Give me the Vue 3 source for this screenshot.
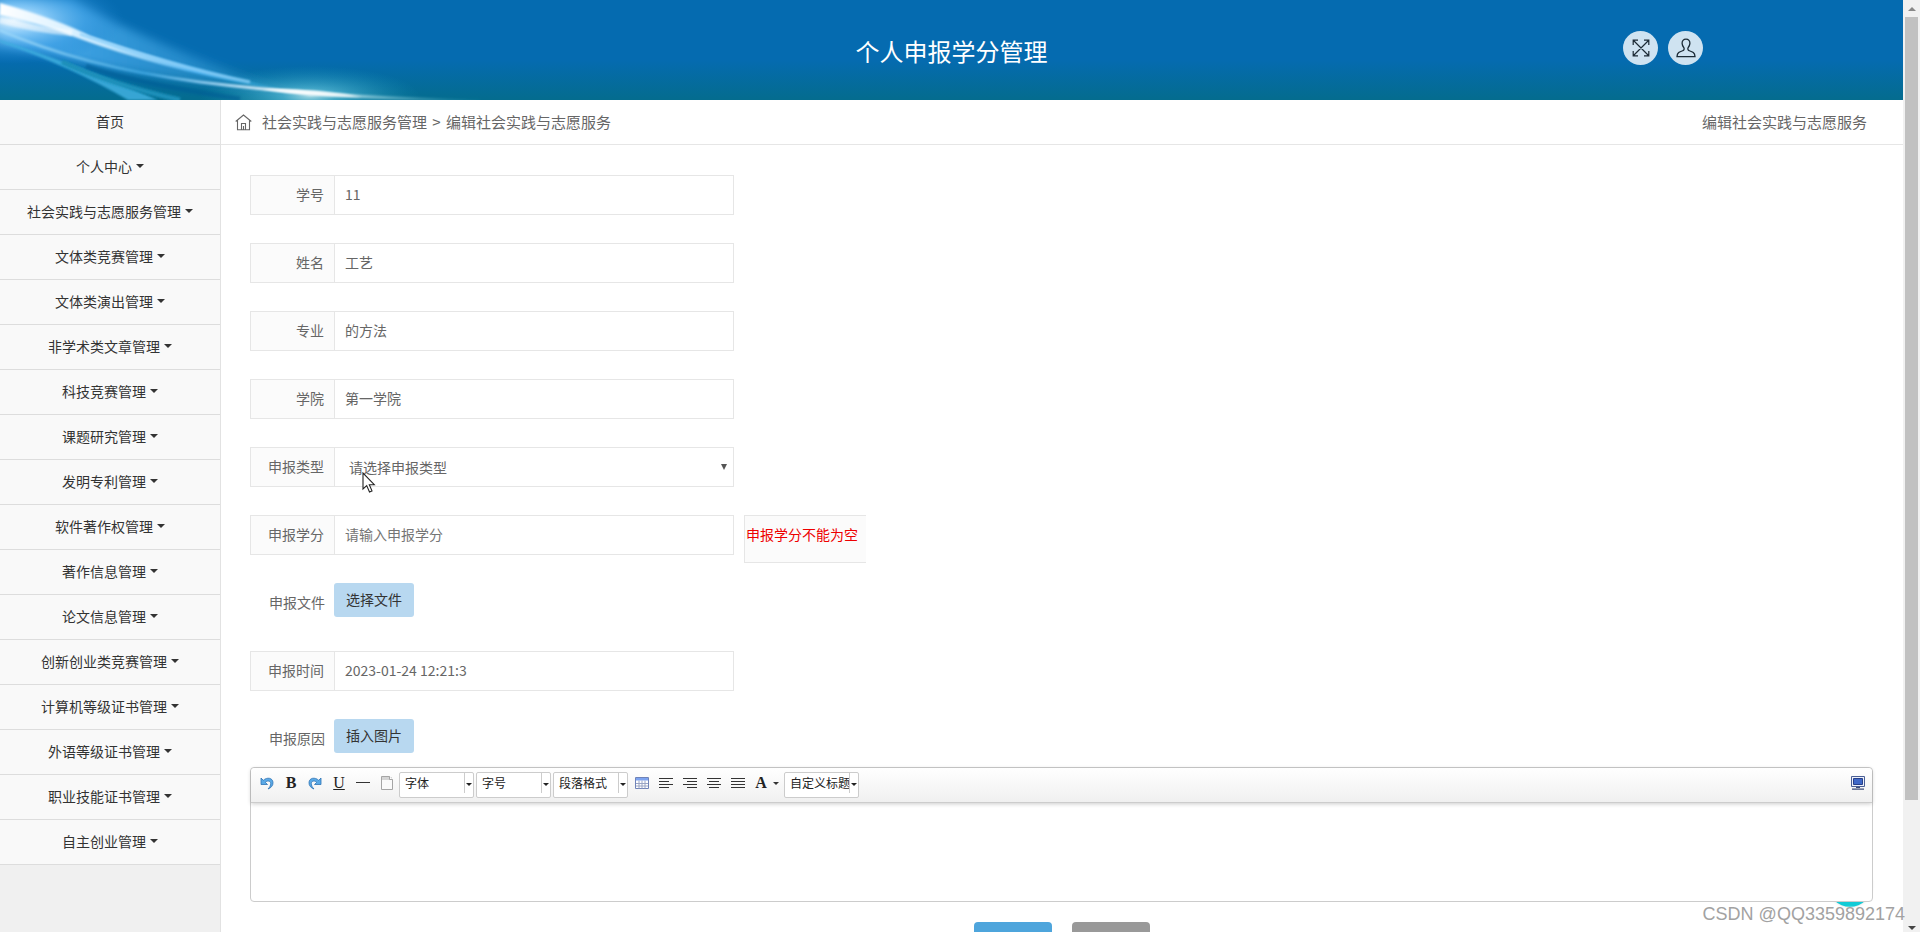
<script setup>
import { ref } from 'vue'

const menu = [
  '个人中心',
  '社会实践与志愿服务管理',
  '文体类竞赛管理',
  '文体类演出管理',
  '非学术类文章管理',
  '科技竞赛管理',
  '课题研究管理',
  '发明专利管理',
  '软件著作权管理',
  '著作信息管理',
  '论文信息管理',
  '创新创业类竞赛管理',
  '计算机等级证书管理',
  '外语等级证书管理',
  '职业技能证书管理',
  '自主创业管理',
]

const profile = ref([
  { id: 'sno', label: '学号', value: '11' },
  { id: 'name', label: '姓名', value: '工艺' },
  { id: 'major', label: '专业', value: '的方法' },
  { id: 'college', label: '学院', value: '第一学院' },
])
const credit = ref('')
const time = ref('2023-01-24 12:21:3')

const aligns = [
  { name: '居左对齐', d: 'M0 1.5H14M0 4.5H10M0 7.5H14M0 10.5H10' },
  { name: '居右对齐', d: 'M0 1.5H14M4 4.5H14M0 7.5H14M4 10.5H14' },
  { name: '居中对齐', d: 'M0 1.5H14M2 4.5H12M0 7.5H14M2 10.5H12' },
  { name: '两端对齐', d: 'M0 1.5H14M0 4.5H14M0 7.5H14M0 10.5H14' },
]
const combos = ['字体', '字号', '段落格式']
</script>

<template>
  <div class="app">
    <div class="page">
      <header class="banner">
        <svg class="rays" width="640" height="100" viewBox="0 0 640 100" aria-hidden="true">
          <defs>
            <radialGradient id="glowA"><stop offset="0" stop-color="#e6f5ff" stop-opacity=".95" /><stop offset=".3" stop-color="#8fcdf8" stop-opacity=".85" /><stop offset=".65" stop-color="#3f9fe4" stop-opacity=".55" /><stop offset="1" stop-color="#1a7fcc" stop-opacity="0" /></radialGradient>
            <radialGradient id="glowB"><stop offset="0" stop-color="#d9fbff" /><stop offset=".25" stop-color="#6fd2ec" stop-opacity=".75" /><stop offset="1" stop-color="#1b9cc4" stop-opacity="0" /></radialGradient>
            <linearGradient id="beam"><stop offset="0" stop-color="#fff" /><stop offset=".35" stop-color="#c8eaff" /><stop offset=".65" stop-color="#4bb0ee" /><stop offset="1" stop-color="#2ba6d2" stop-opacity=".2" /></linearGradient>
            <linearGradient id="arc"><stop offset="0" stop-color="#9bd6fa" /><stop offset=".3" stop-color="#3aa3de" /><stop offset=".62" stop-color="#fff" /><stop offset="1" stop-color="#2ba6c0" stop-opacity=".1" /></linearGradient>
            <linearGradient id="haze"><stop offset="0" stop-color="#5bbcff" stop-opacity=".9" /><stop offset="1" stop-color="#2a94cc" stop-opacity=".3" /></linearGradient>
            <filter id="soft1" x="-20%" y="-50%" width="140%" height="200%"><feGaussianBlur stdDeviation="1" /></filter>
            <filter id="soft6" x="-20%" y="-40%" width="140%" height="180%"><feGaussianBlur stdDeviation="5" /></filter>
          </defs>
          <path d="M0 0H70Q150 42 250 78L310 95Q170 82 60 58L0 42Z" fill="url(#haze)" filter="url(#soft6)" />
          <ellipse cx="14" cy="20" rx="110" ry="44" fill="url(#glowA)" />
          <ellipse cx="310" cy="96" rx="110" ry="30" fill="url(#glowB)" opacity=".75" />
          <path d="M0 40Q70 62 158 100H128Q70 66 0 42Z" fill="#3fb0e0" opacity=".85" filter="url(#soft1)" />
          <path d="M62 62Q110 84 180 100" fill="none" stroke="#1b8fb9" stroke-width="5" filter="url(#soft1)" />
          <path d="M86 66Q130 82 240 99" fill="none" stroke="#035c95" stroke-width="5" opacity=".55" filter="url(#soft1)" />
          <path d="M0 3Q60 20 90 36Q180 67 300 93Q180 76 72 36Q30 20 0 15Z" fill="url(#beam)" filter="url(#soft1)" />
          <path d="M80 34Q170 66 250 82" fill="none" stroke="#8fd2fb" stroke-width="3" opacity=".8" filter="url(#soft1)" />
          <path d="M0 20Q32 29 72 33" fill="none" stroke="#fff" stroke-width="6" opacity=".55" filter="url(#soft1)" />
          <path d="M0 30Q80 66 200 82Q320 97 480 101" fill="none" stroke="url(#arc)" stroke-width="3" filter="url(#soft1)" />
          <path d="M262 89Q314 88 362 97Q312 98 262 89Z" fill="#fff" opacity=".8" filter="url(#soft1)" />
        </svg>
        <h1>个人申报学分管理</h1>
        <div class="tools">
          <button type="button" class="round" aria-label="全屏">
            <svg width="18" height="18" viewBox="0 0 18 18" fill="none" stroke="#1c2b36" stroke-width="1.2"><path d="M1.5 1.5 16.5 16.5M16.5 1.5 1.5 16.5M1.2 6V1.2H6M12 1.2H16.8V6M16.8 12V16.8H12M6 16.8H1.2V12" /></svg>
          </button>
          <button type="button" class="round" aria-label="用户">
            <svg width="20" height="20" viewBox="0 0 20 20" fill="none" stroke="#1c2b36" stroke-width="1.3"><path d="M10 1.2C7.4 1.2 6 3 6.1 5.4C6.2 7.4 7 8.700 7.900 9.700C8.500 10.800 8 12.200 6.800 12.700C3.500 13.800 1.200 14.500 1 18.600H19C18.800 14.500 16.500 13.800 13.200 12.700C12 12.200 11.500 10.800 12.100 9.700C13 8.700 13.800 7.400 13.900 5.400C14 3 12.600 1.200 10 1.200Z" /></svg>
          </button>
        </div>
      </header>

      <div class="columns">
        <nav class="side">
          <a href="#" class="item">首页</a>
          <a v-for="m in menu" :key="m" href="#" class="item">{{ m }}<i class="caret"></i></a>
        </nav>

        <main class="main">
          <div class="crumbs">
            <svg width="17" height="17" viewBox="0 0 17 17" fill="none" stroke="#666" stroke-width="1.1"><path d="M.7 7.500 8.500 1 16.300 7.500M2.500 6.500V15.800H14.500V6.500M6.500 15.500V9.500H10.500V15.500M8.500 12V15.500" /></svg>
            <a href="#">社会实践与志愿服务管理</a>
            <span class="sep">&gt;</span>
            <span>编辑社会实践与志愿服务</span>
            <span class="here">编辑社会实践与志愿服务</span>
          </div>

          <form class="form" @submit.prevent>
            <div v-for="f in profile" :key="f.id" class="row">
              <div class="box">
                <label :for="f.id">{{ f.label }}</label>
                <input :id="f.id" v-model="f.value" type="text" />
              </div>
            </div>
            <div class="row">
              <div class="box pick">
                <label for="type">申报类型</label>
                <select id="type"><option>请选择申报类型</option></select>
                <svg class="cursor" width="14" height="22" viewBox="0 0 14 22" aria-hidden="true"><path d="M1 1V17L4.700 13.600 7.500 20 10 18.900 7.300 12.700H12.300Z" fill="#fff" stroke="#222" stroke-width="1.100" /></svg>
              </div>
            </div>
            <div class="row">
              <div class="box">
                <label for="credit">申报学分</label>
                <input id="credit" v-model="credit" type="text" placeholder="请输入申报学分" />
              </div>
              <div class="error" role="alert">申报学分不能为空</div>
            </div>
            <div class="row">
              <div class="box plain">
                <label for="file">申报文件</label>
                <button id="file" type="button" class="soft">选择文件</button>
              </div>
            </div>
            <div class="row">
              <div class="box">
                <label for="time">申报时间</label>
                <input id="time" v-model="time" type="text" />
              </div>
            </div>
            <div class="row last">
              <div class="box plain">
                <label for="image">申报原因</label>
                <button id="image" type="button" class="soft">插入图片</button>
              </div>
            </div>

            <div class="editor">
              <div class="bar">
                <button type="button" aria-label="撤销"><svg width="14" height="14" viewBox="0 0 14 14"><path d="M1 2V8.500H7.500L5.300 6.300C7 4.500 10.500 4.500 10.700 7.500C10.800 9.500 9.500 11.500 8 13C11 12 13.200 9.500 13 6.500C12.800 1.800 7 .8 3.300 4.300Z" fill="#5aa9e6" stroke="#2f74b5" stroke-width=".8" /></svg></button>
                <button type="button" class="serif" aria-label="加粗"><b>B</b></button>
                <button type="button" aria-label="重做"><svg width="14" height="14" viewBox="0 0 14 14"><path d="M13 2V8.500H6.500L8.700 6.300C7 4.500 3.500 4.500 3.300 7.500C3.200 9.500 4.500 11.500 6 13C3 12 .8 9.500 1 6.500C1.200 1.800 7 .8 10.700 4.300Z" fill="#5aa9e6" stroke="#2f74b5" stroke-width=".8" /></svg></button>
                <button type="button" class="serif" aria-label="下划线"><u>U</u></button>
                <button type="button" aria-label="分隔线"><svg width="14" height="14" viewBox="0 0 14 14"><path d="M0 6.500H14" stroke="#333" /></svg></button>
                <button type="button" aria-label="清空文档"><svg width="14" height="14" viewBox="0 0 14 14"><path d="M1.500.5H9.500L12.500 3.500V13.500H1.500Z" fill="#fafafa" stroke="#a5a5a5" /><path d="M2 1H12V4H2Z" fill="#d5d5d5" /><path d="M9.500.5V3.500H12.500" fill="#fff" stroke="#a5a5a5" /></svg></button>
                <span v-for="c in combos" :key="c" class="combo"><select :aria-label="c"><option>{{ c }}</option></select></span>
                <button type="button" aria-label="插入表格"><svg width="14" height="14" viewBox="0 0 14 14"><path d="M.5 1.500H13.500V12.500H.5Z" fill="#fff" stroke="#6f83b8" /><path d="M1 2H13V4.500H1Z" fill="#7da3f0" /><path d="M1 7.500H13M1 10H13M4 4.500V12.500M7 4.500V12.500M10 4.500V12.500" stroke="#9aa5c4" /></svg></button>
                <button v-for="a in aligns" :key="a.name" type="button" :aria-label="a.name"><svg width="14" height="12" viewBox="0 0 14 12"><path :d="a.d" stroke="#333" /></svg></button>
                <button type="button" class="serif color" aria-label="字体颜色"><b>A</b><i class="caret tiny"></i></button>
                <span class="combo"><select aria-label="自定义标题"><option>自定义标题</option></select></span>
                <button type="button" class="full" aria-label="全屏编辑"><svg width="14" height="14" viewBox="0 0 14 14"><path d="M.5.5H13.500V10.500H.5Z" fill="#eef1fa" stroke="#4a5f95" /><path d="M2.500 2.500H11.500V8.500H2.500Z" fill="#3f68c8" stroke="#27408a" /><path d="M5 11.500H9M1 13.200H13" stroke="#3c4c78" stroke-width="1.200" /></svg></button>
              </div>
              <textarea class="area" aria-label="申报原因内容"></textarea>
            </div>

            <div class="actions">
              <button type="submit" class="ok" aria-label="提交"></button>
              <button type="button" class="back" aria-label="返回"></button>
            </div>
          </form>
          <span class="bubble"></span>
        </main>
      </div>
    </div>
    <div class="scroll" aria-hidden="true">
      <i class="up"></i>
      <div class="thumb"></div>
      <i class="down"></i>
    </div>
    <div class="mark">CSDN @QQ3359892174</div>
  </div>
</template>

<style>
body {
  margin: 0;
  overflow: hidden;
}
</style>

<style scoped>
.app {
  position: relative;
  display: flex;
  height: 100vh;
  overflow: hidden;
  background: #fff;
  color: #666;
  font: 14px/20px "Noto Sans CJK SC", sans-serif;
}
.app * {
  box-sizing: border-box;
}
button,
input,
select,
textarea {
  margin: 0;
  font: inherit;
  color: inherit;
}
a {
  color: inherit;
  text-decoration: none;
}
.page {
  flex: 1;
  min-width: 0;
  display: flex;
  flex-direction: column;
}
.banner {
  position: relative;
  flex: none;
  display: flex;
  align-items: center;
  justify-content: center;
  height: 100px;
  background: linear-gradient(#056bb0 0, #056bb0 60px, #046c8e 100px);
}
.rays {
  position: absolute;
  left: 0;
  top: 0;
}
h1 {
  margin: 2px 0 0;
  font-size: 24px;
  line-height: 36px;
  font-weight: 400;
  color: #fff;
}
.tools {
  position: absolute;
  right: 200px;
  top: 31px;
  display: flex;
  gap: 10px;
}
.round {
  display: flex;
  align-items: center;
  justify-content: center;
  width: 35px;
  height: 34px;
  padding: 0;
  border: 0;
  border-radius: 50%;
  background: #cfe3f1;
}
.columns {
  flex: 1;
  display: flex;
  min-height: 0;
}
.side {
  flex: none;
  width: 221px;
  border-right: 1px solid #e2e2e2;
  background: #f0f0f0;
}
.item {
  display: flex;
  align-items: center;
  justify-content: center;
  height: 45px;
  padding-bottom: 2px;
  border-bottom: 1px solid #ddd;
  background: #f9f9f9;
  color: #333;
}
.caret {
  margin-left: 4px;
  border: 4px solid transparent;
  border-top-color: #333;
  border-bottom: 0;
}
.main {
  position: relative;
  flex: 1;
  min-width: 0;
}
.crumbs {
  display: flex;
  align-items: center;
  height: 45px;
  padding: 0 36px 0 14px;
  border-bottom: 1px solid #e6e6e6;
  font-size: 15px;
}
.crumbs svg {
  margin-right: 10px;
}
.sep {
  width: 19px;
  text-align: center;
}
.here {
  margin-left: auto;
}
.form {
  padding: 30px 30px 0 29px;
}
.row {
  display: flex;
  align-items: flex-start;
  gap: 10px;
  height: 40px;
  margin-bottom: 28px;
}
.row.last {
  margin-bottom: 8px;
}
.box {
  display: flex;
  width: 484px;
  height: 40px;
  border: 1px solid #e6e6e6;
}
.box label {
  flex: none;
  width: 84px;
  padding: 8px 10px 8px 0;
  border-right: 1px solid #e6e6e6;
  background: #fbfbfb;
  text-align: right;
}
.box input,
.box select {
  flex: 1;
  min-width: 0;
  padding: 0 10px 2px;
  border: 0;
  outline: 0;
  background: #fff;
}
.box input::placeholder {
  color: #757575;
  opacity: 1;
}
.pick {
  position: relative;
}
.box select {
  appearance: none;
  padding: 0 14px;
}
.pick::after {
  content: "";
  position: absolute;
  right: 6px;
  top: 16px;
  border: 3px solid transparent;
  border-top: 6px solid #555;
  border-bottom: 0;
}
.cursor {
  position: absolute;
  left: 111px;
  top: 24px;
}
.plain {
  border-color: transparent;
}
.plain label {
  width: 83px;
  padding-right: 9px;
  border-right: 0;
  background: none;
}
.soft {
  width: 80px;
  height: 34px;
  margin-top: -1px;
  padding: 0 0 2px;
  border: 0;
  border-radius: 3px;
  background: #b8d8f0;
  color: #333;
}
.error {
  width: 122px;
  height: 48px;
  padding: 8px 0 0 1px;
  border: solid #e6e6e6;
  border-width: 1px 0 1px 1px;
  background: #fbfbfb;
  color: #e00;
}
.editor {
  position: relative;
  z-index: 1;
  border: 1px solid #ccc;
  border-radius: 4px;
  background: #fff;
}
.bar {
  position: relative;
  display: flex;
  align-items: center;
  height: 35px;
  padding: 0 7px 4px 4px;
  border-bottom: 1px solid #ccc;
  border-radius: 4px 4px 0 0;
  background: linear-gradient(#fff, #f0f0f0);
  box-shadow: 0 1px 4px rgba(0, 0, 0, 0.2);
  color: #222;
  font-size: 12px;
}
.bar button {
  display: flex;
  align-items: center;
  justify-content: center;
  width: 24px;
  height: 24px;
  padding: 0;
  border: 0;
  background: none;
}
.bar .serif {
  font: 16px/20px "Liberation Serif", serif;
}
.bar .color {
  width: 34px;
}
.caret.tiny {
  border-width: 3px;
  border-bottom: 0;
  margin: 0 0 0 6px;
}
.combo {
  position: relative;
  width: 75px;
  height: 26px;
  margin: 4px 2px 0 0;
  border: 1px solid #ccc;
  border-radius: 2px;
  background: #fff;
}
.combo select {
  appearance: none;
  width: 65px;
  height: 20px;
  padding: 0 0 0 5px;
  overflow: hidden;
  border: 0;
  border-right: 1px solid #ccc;
  outline: 0;
  background: none;
}
.combo::after {
  content: "";
  position: absolute;
  right: 1px;
  top: 10px;
  border: 3px solid transparent;
  border-top-color: #222;
  border-bottom: 0;
}
.bar .full {
  margin-left: auto;
  margin-right: -5px;
}
.area {
  display: block;
  width: 100%;
  height: 98px;
  border: 0;
  outline: 0;
  resize: none;
  background: none;
}
.actions {
  display: flex;
  justify-content: center;
  gap: 20px;
  padding-top: 20px;
}
.actions button {
  width: 78px;
  height: 34px;
  border: 0;
  border-radius: 4px;
}
.ok {
  background: #4ea5dc;
}
.back {
  background: #999;
}
.bubble {
  position: absolute;
  right: 31px;
  top: 763px;
  width: 44px;
  height: 44px;
  border-radius: 50%;
  background: #12cbd6;
  box-shadow: 0 0 3px rgba(0, 0, 0, 0.15);
}
.scroll {
  flex: none;
  display: flex;
  flex-direction: column;
  align-items: center;
  width: 17px;
  background: #f1f1f1;
}
.up {
  margin: 7px 0 6px;
  border: 4px solid transparent;
  border-bottom-color: #888;
  border-top: 0;
}
.thumb {
  flex: 0 0 84%;
  width: 13px;
  background: #c1c1c1;
}
.down {
  margin-top: auto;
  margin-bottom: 2px;
  border: 4px solid transparent;
  border-top-color: #444;
  border-bottom: 0;
}
.mark {
  position: absolute;
  z-index: 2;
  right: 15px;
  bottom: 8px;
  font: 18px/20px "Liberation Sans", Arial, sans-serif;
  color: #a2a2a2;
  text-shadow: 0 0 2px #fff;
}
</style>
